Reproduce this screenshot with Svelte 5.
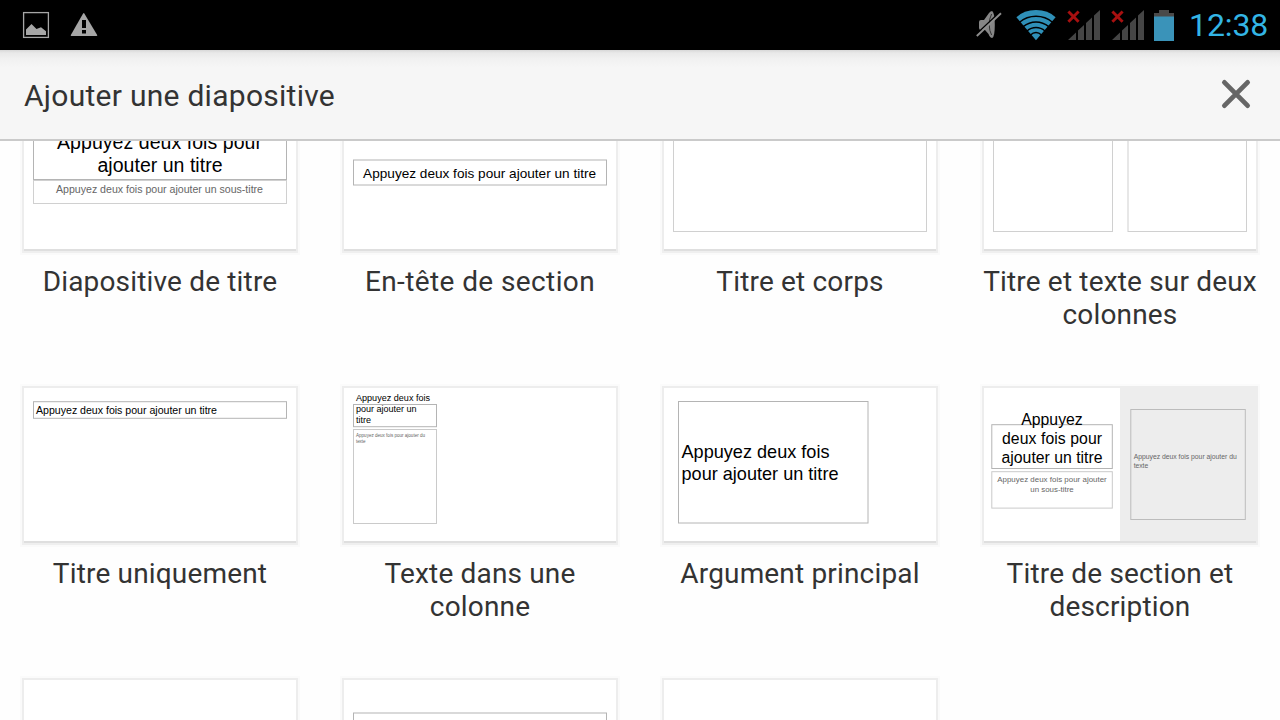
<script>
  const T = '#000';
  const S = '#666';
  const slides = [
    {
      name: ['Diapositive de titre'],
      boxes: [[9.5, 20.5, 253, 63, '#b4b4b4'], [9.5, 84.5, 253, 23, '#d0d0d0']],
      texts: [
        [135.5, 52.5, 19.5, 205, 'Appuyez deux fois pour', T, 1],
        [136, 76, 19.5, 125, 'ajouter un titre', T, 1],
        [135.5, 97.3, 10.6, 207, 'Appuyez deux fois pour ajouter un sous-titre', S, 1]
      ]
    },
    {
      name: ['En-tête de section'],
      tracking: 0.4,
      boxes: [[9.5, 64, 253, 25, '#b4b4b4']],
      texts: [[135.6, 81.6, 13.6, 233, 'Appuyez deux fois pour ajouter un titre', T, 1]]
    },
    { name: ['Titre et corps'], boxes: [[9.5, 34.5, 253, 101, '#d0d0d0']], texts: [] },
    {
      name: ['Titre et texte sur deux', 'colonnes'],
      boxes: [[9.5, 34.5, 119, 101, '#d0d0d0'], [144, 34.5, 118.5, 101, '#d0d0d0']],
      texts: []
    },
    {
      name: ['Titre uniquement'],
      boxes: [[9.5, 13.7, 253, 16.6, '#b4b4b4']],
      texts: [[12, 26.3, 10.6, 181, 'Appuyez deux fois pour ajouter un titre', T]]
    },
    {
      name: ['Texte dans une', 'colonne'],
      boxes: [[9.5, 16.5, 83, 22.2, '#b4b4b4'], [9.5, 41.5, 83, 94, '#cacaca']],
      texts: [
        [12, 13.3, 9.06, 74, 'Appuyez deux fois', T],
        [12, 24.2, 9.06, 60.5, 'pour ajouter un', T],
        [12, 34.8, 9.06, 15, 'titre', T],
        [12, 48.6, 4.55, 69, 'Appuyez deux fois pour ajouter du', S],
        [12, 54.8, 4.55, 9.5, 'texte', S]
      ]
    },
    {
      name: ['Argument principal'],
      boxes: [[14.5, 13.5, 189.5, 121.5, '#b4b4b4']],
      texts: [
        [17.5, 70, 18.1, 148, 'Appuyez deux fois', T],
        [17.5, 92, 18.1, 157, 'pour ajouter un titre', T]
      ]
    },
    {
      name: ['Titre de section et', 'description'],
      panel: true,
      boxes: [
        [7.8, 36.7, 120.5, 43.8, '#b4b4b4'],
        [7.8, 83.7, 120.5, 36.4, '#cacaca'],
        [146.8, 21.5, 114.5, 110, '#bcbcbc']
      ],
      texts: [
        [68, 37.3, 15.8, 61.5, 'Appuyez', T, 1],
        [68, 56.2, 15.8, 100, 'deux fois pour', T, 1],
        [68, 75, 15.8, 101, 'ajouter un titre', T, 1],
        [68, 94, 7.9, 109.5, 'Appuyez deux fois pour ajouter', S, 1],
        [68, 103.5, 7.9, 43.5, 'un sous-titre', S, 1],
        [149.7, 71, 6.8, 103, 'Appuyez deux fois pour ajouter du', S],
        [149.7, 80, 6.8, 14.5, 'texte', S]
      ]
    },
    { name: [], boxes: [], texts: [] },
    { name: [], boxes: [[9.5, 33, 253, 90, '#b4b4b4']], texts: [] },
    { name: [], boxes: [], texts: [] }
  ];
</script>

{#snippet signal()}
  <svg class="signal" width="34" height="32" viewBox="0 0 34 32">
    <path fill="#454545" d="M1 31 9 23.5V31ZM11 21.6 17 16V31H11ZM19 14 25 8.5V31H19ZM27 6.6 33 1V31H27Z" />
    <path stroke="#a81010" stroke-width="2.9" d="M1.4 2.4 11.6 12.8M11.6 2.4 1.4 12.8" />
  </svg>
{/snippet}

<div class="screen">
  <div class="status">
    <svg width="28" height="28" viewBox="0 0 28 28">
      <rect x="1.6" y="1.6" width="24.8" height="24.8" fill="none" stroke="#a6a6a6" stroke-width="1.3" />
      <path fill="#a6a6a6" d="M4 24V18.5L9.5 13 14.5 18 19 16.2 24 20.3V24Z" />
    </svg>
    <svg class="warn" width="28" height="25" viewBox="0 0 28 25">
      <path fill="#a6a6a6" d="M14 0 27.3 22.2Q27.3 23 26.6 23H1.4Q.7 23 .7 22.2L12.8 1Q13.4 0 14 0Z" />
      <path d="M12 7h4v8h-4zM12 17h4v3.5h-4z" />
    </svg>
    <div class="fill"></div>
    <svg class="mute" width="27" height="30" viewBox="0 0 27 30">
      <path fill="#868686" d="M3 12Q3 10 5 10H8L13 3Q14.5 1 16.2 1 18.8 3 18.8 15T16.2 28Q14 28 12.5 24L9 20H5Q3 20 3 18Z" />
      <path fill="none" stroke="#333" d="M15.6 4Q13 9 13.2 15T15.6 25" />
      <path stroke="#000" stroke-width="1.6" d="M0 24.5 24 2" />
      <path stroke="#8e8e8e" stroke-width="1.9" d="M.8 26 25 3.2" />
    </svg>
    <svg class="wifi" width="40" height="32" viewBox="0 0 40 32">
      <path fill="#2f90b8" d="M20 31.2.4 8.2Q8 1 20 1T39.6 8.2Z" />
      <g fill="none" stroke="#000" stroke-width="1.5">
        <path d="M3.5 13.2Q10.5 7.3 20 7.3T36.5 13.2" />
        <path d="M7.2 17.7Q13 13 20 13T32.8 17.7" />
        <path d="M11 22Q15 18.5 20 18.5T29 22" />
        <path d="M14.5 26Q17 23.6 20 23.6T25.5 26" />
      </g>
    </svg>
    {@render signal()}
    {@render signal()}
    <svg class="battery" width="20" height="32" viewBox="0 0 20 32">
      <path fill="#4a4a4a" d="M5 1h10v3h5v4H0V4h5z" />
      <path fill="#3a93b9" d="M0 7.5h20V32H0z" />
    </svg>
    <span class="clock">12:38</span>
  </div>

  <header>
    <h1>Ajouter une diapositive</h1>
    <svg width="30" height="30" viewBox="0 0 30 30">
      <path stroke="#666" stroke-width="4.8" stroke-linecap="round" d="M3.4 3.4 26.6 26.6M26.6 3.4 3.4 26.6" />
    </svg>
  </header>

  <main>
    <div class="grid">
      {#each slides as s}
        <div class="item">
          <div class="thumb">
            <svg width="274" height="153" viewBox="0 0 274 153">
              {#if s.panel}<rect x="136" width="138" height="153" fill="#ededed" />{/if}
              {#each s.boxes as [x, y, w, h, c]}
                <rect {x} {y} width={w} height={h} fill="none" stroke={c} />
              {/each}
              {#each s.texts as [x, y, size, w, t, c, mid]}
                <text {x} {y} font-size={size} textLength={w} fill={c} text-anchor={mid ? 'middle' : 'start'}>{t}</text>
              {/each}
            </svg>
          </div>
          <div class="label" style:letter-spacing="{s.tracking ?? 0.17}px">
            {#each s.name as line}<span>{line}</span>{/each}
          </div>
        </div>
      {/each}
    </div>
  </main>
</div>

<style>
  :global(body) {
    overflow: hidden;
  }
  .screen {
    width: 1280px;
    height: 720px;
    display: flex;
    flex-direction: column;
    overflow: hidden;
    background: #fefefe;
    font-family: Roboto, sans-serif;
    color: #333;
  }
  svg {
    display: block;
    flex: none;
  }
  .status {
    flex: none;
    height: 50px;
    box-sizing: border-box;
    padding: 0 12px 0 22px;
    display: flex;
    align-items: center;
    background: #000;
  }
  .warn {
    margin-left: 20px;
  }
  .fill {
    flex: 1;
  }
  .mute {
    margin-right: 13px;
  }
  .wifi {
    margin-right: 11px;
  }
  .signal {
    margin-right: 10px;
  }
  .battery {
    margin-right: 15px;
    margin-left: -1px;
  }
  .clock {
    width: 79px;
    font-size: 32px;
    line-height: 52px;
    color: #33b5e5;
    font-weight: 400;
    letter-spacing: -0.1px;
    white-space: nowrap;
  }
  header {
    flex: none;
    height: 91px;
    box-sizing: border-box;
    padding: 0 29px 2px 24px;
    display: flex;
    align-items: center;
    justify-content: space-between;
    border-bottom: 2px solid #cacaca;
    background: linear-gradient(#d8d8d8, #e9e9e9 3px, #f1f1f1 9px, #f6f6f6 18px);
  }
  h1 {
    margin: 5px 0 0;
    font-size: 30px;
    line-height: 40px;
    font-weight: 400;
    letter-spacing: 0.27px;
  }
  main {
    flex: 1;
    min-height: 0;
    overflow: hidden;
  }
  .grid {
    margin-top: -45px;
    padding-left: 24px;
    display: grid;
    grid-template-columns: repeat(4, 272px);
    grid-auto-rows: 292px;
    column-gap: 48px;
  }
  .thumb {
    width: 272px;
    height: 153px;
    background: #fff;
    box-shadow:
      0 2px 0 0 #dfdfdf,
      0 0 0 2px #ededed,
      0 2px 0 2px #efefef,
      0 2px 0 4px #fafafa,
      0 0 0 4px #fbfbfb;
  }
  .thumb text {
    font-family: "Liberation Sans", Arial, sans-serif;
  }
  .label {
    margin: 16px -20px 0;
    display: flex;
    flex-direction: column;
    align-items: center;
    font-size: 28px;
    line-height: 33px;
    white-space: nowrap;
  }
</style>
